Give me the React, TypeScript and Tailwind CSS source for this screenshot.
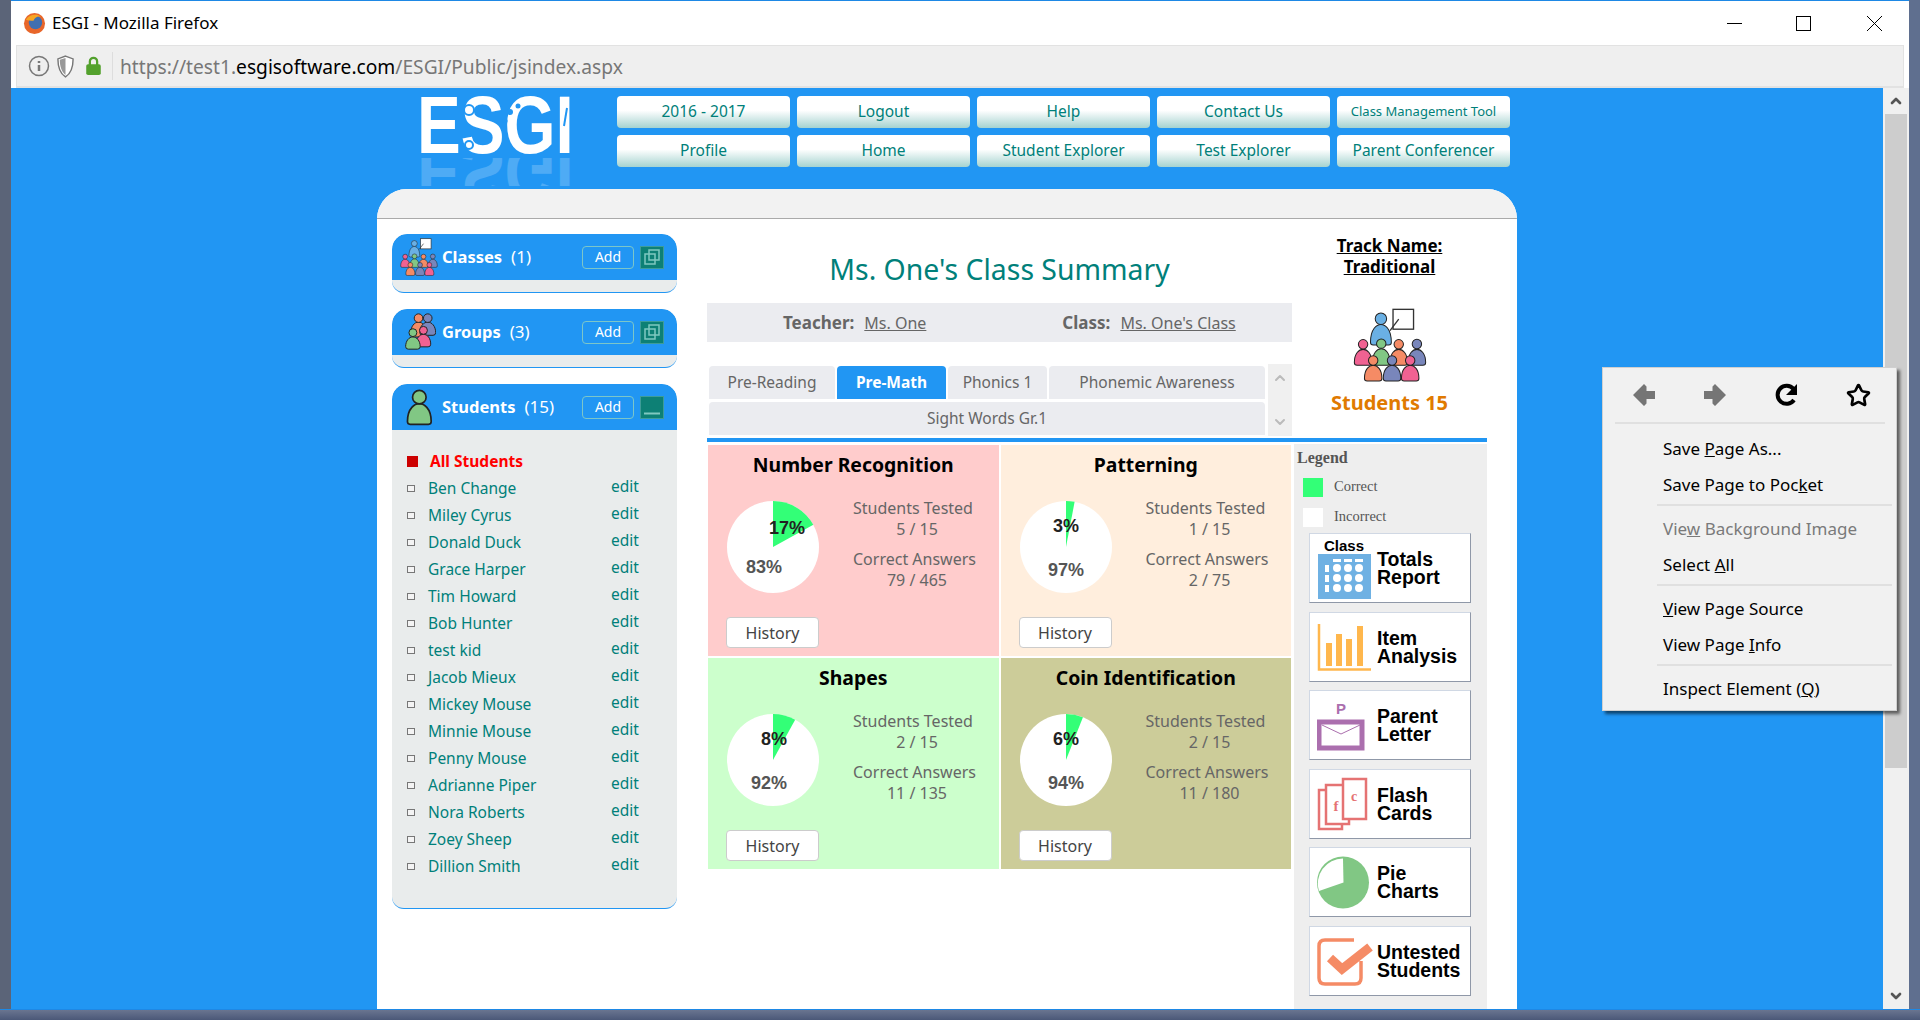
import { ChevronDown, ChevronUp, Star } from 'lucide-react';

const teal = 'text-[#00807a]';

const topButtons = ['2016 - 2017', 'Logout', 'Help', 'Contact Us', 'Class Management Tool', 'Profile', 'Home', 'Student Explorer', 'Test Explorer', 'Parent Conferencer'];

const students = ['Ben Change', 'Miley Cyrus', 'Donald Duck', 'Grace Harper', 'Tim Howard', 'Bob Hunter', 'test kid', 'Jacob Mieux', 'Mickey Mouse', 'Minnie Mouse', 'Penny Mouse', 'Adrianne Piper', 'Nora Roberts', 'Zoey Sheep', 'Dillion Smith'];

const tiles = [
  { name: 'Number Recognition', bg: 'bg-[#ffcccc]', pct: 17, tested: '5 / 15', answers: '79 / 465', a: [14, -19], b: [-9, 20] },
  { name: 'Patterning', bg: 'bg-[#ffeedd]', pct: 3, tested: '1 / 15', answers: '2 / 75', a: [0, -21], b: [0, 23] },
  { name: 'Shapes', bg: 'bg-[#ccffcc]', pct: 8, tested: '2 / 15', answers: '11 / 135', a: [1, -21], b: [-4, 23] },
  { name: 'Coin Identification', bg: 'bg-[#cccc99]', pct: 6, tested: '2 / 15', answers: '11 / 180', a: [0, -21], b: [0, 23] },
];

// one figure of the people icons: head + dome body
const Person = ({ x, y, r, w, top, bot, fill, sw = 3 }: { x: number; y: number; r: number; w: number; top: number; bot: number; fill: string; sw?: number }) => (
  <g fill={fill} stroke="#222" strokeWidth={sw}>
    <path d={`M${x - w} ${bot - 8}C${x - w} ${top + 12} ${x - 12} ${top} ${x} ${top}C${x + 12} ${top} ${x + w} ${top + 12} ${x + w} ${bot - 8}Q${x + w} ${bot} ${x + w - 8} ${bot}L${x - w + 8} ${bot}Q${x - w} ${bot} ${x - w} ${bot - 8}Z`} />
    <circle cx={x} cy={y} r={r} />
  </g>
);

const ClassIcon = ({ className }: { className: string }) => (
  <svg viewBox="195 235 220 220" className={className}>
    <rect x="314" y="239" width="61" height="59" fill="#fff" stroke="#333" strokeWidth="4" />
    <path d="M305 302L331 268" stroke="#333" strokeWidth="4" />
    <Person x={278} y={267} r={17} w={31} top={284} bot={345} fill="#6ab0e4" />
    <Person x={225} y={343} r={14} w={26} top={358} bot={405} fill="#f06292" />
    <Person x={385} y={342} r={14} w={26} top={358} bot={405} fill="#7986bb" />
    <Person x={331} y={343} r={14} w={26} top={358} bot={405} fill="#f58b65" />
    <Person x={279} y={341} r={14} w={26} top={356} bot={405} fill="#81c784" />
    <Person x={255} y={391} r={14} w={26} top={405} bot={452} fill="#f58b65" />
    <Person x={365} y={391} r={14} w={26} top={405} bot={452} fill="#f06292" />
    <Person x={311} y={391} r={14} w={26} top={405} bot={452} fill="#7986bb" />
  </svg>
);

const GroupsIcon = () => (
  <svg viewBox="60 275 100 120" className="h-[40px] w-[33px]">
    <Person x={107} y={293} r={13} w={24} top={305} bot={350} fill="#f58b65" />
    <Person x={135} y={293} r={13} w={24} top={305} bot={345} fill="#7986bb" />
    <Person x={122} y={330} r={12} w={22} top={342} bot={380} fill="#f06292" />
    <Person x={90} y={337} r={12} w={22} top={350} bot={387} fill="#81c784" />
  </svg>
);

const StudentIcon = () => (
  <svg viewBox="65 500 85 112" className="h-[38px] w-[29px]">
    <Person x={107} y={527} r={20} w={35} top={546} bot={607} fill="#81c784" sw={5} />
  </svg>
);

const Expand = ({ minimized }: { minimized?: boolean }) => (
  <div className="flex h-[23px] w-[24px] items-center justify-center border border-[#3d9c98] bg-[#0d8075]">
    <svg viewBox="0 0 22 22" className="h-[22px] w-[22px]" fill="none" stroke="#7fc8c0" strokeWidth="1.5">
      {minimized ? (
        <path d="M3 17.5H19" strokeWidth="2" />
      ) : (
        <>
          <rect x="8" y="4" width="10" height="10" />
          <rect x="4" y="8" width="10" height="10" />
        </>
      )}
    </svg>
  </div>
);

const PanelHeader = ({ title, count, icon, minimized }: { title: string; count: string; icon: React.ReactNode; minimized?: boolean }) => (
  <div className="flex h-[46px] items-center rounded-t-[15px] bg-[#2196f3] pr-[13px] text-white">
    <div className="flex w-[50px] justify-center pl-[4px]">{icon}</div>
    <span className="text-[16.5px] font-bold">{title}</span>
    <span className="ml-[9px] text-[17px]">{count}</span>
    <button className="ml-auto mr-[6px] h-[23px] w-[52px] rounded-[4px] border border-[#7cc6c8] text-[14px] leading-none">Add</button>
    <Expand minimized={minimized} />
  </div>
);

const Panel = ({ title, count, icon }: { title: string; count: string; icon: React.ReactNode }) => (
  <div className="overflow-hidden rounded-t-[15px] rounded-b-[12px] border-b border-[#2196f3] bg-[#e9ecec]">
    <PanelHeader title={title} count={count} icon={icon} />
    <div className="h-[12px]" />
  </div>
);

const Pie = ({ pct, a, b }: { pct: number; a: number[]; b: number[] }) => {
  const angle = (pct / 100) * 2 * Math.PI;
  const ex = 46 + 46 * Math.sin(angle);
  const ey = 46 - 46 * Math.cos(angle);
  return (
    <svg width="92" height="92" viewBox="0 0 92 92" className="shrink-0 font-['Liberation_Sans',sans-serif] text-[18px] font-bold">
      <circle cx="46" cy="46" r="46" fill="#fff" />
      <path d={`M46 46L46 0A46 46 0 0 1 ${ex} ${ey}Z`} fill="#33ff77" />
      <text x={46 + a[0]} y={46 + a[1] + 6} textAnchor="middle" fill="#222">{pct}%</text>
      <text x={46 + b[0]} y={46 + b[1] + 6} textAnchor="middle" fill="#555">{100 - pct}%</text>
    </svg>
  );
};

const Tile = ({ tile }: { tile: (typeof tiles)[number] }) => (
  <div className={`flex h-[211px] flex-col ${tile.bg}`}>
    <div className="h-[40px] text-center text-[19.4px] font-bold leading-[40px] text-black">{tile.name}</div>
    <div className="mt-[13px] flex pl-[19px]">
      <div className="mt-[3px]"><Pie pct={tile.pct} a={tile.a} b={tile.b} /></div>
      <div className="ml-[34px] w-[120px] whitespace-nowrap text-center text-[16px] leading-[21px] text-[#666]">
        <div>Students Tested</div>
        <div className="pl-[8px]">{tile.tested}</div>
        <div className="mt-[9px]">Correct Answers</div>
        <div className="pl-[8px]">{tile.answers}</div>
      </div>
    </div>
    <button className="ml-[18px] mt-[24px] h-[31px] w-[93px] rounded-[4px] border border-[#ccc] bg-white text-[16px] text-[#444]">History</button>
  </div>
);

const ReportButton = ({ lines, icon }: { lines: string[]; icon: React.ReactNode }) => (
  <div className="flex h-[70px] items-center gap-[4px] border border-t-[#d0d8e4] border-l-[#d0d8e4] border-r-[#8f98a8] border-b-[#8f98a8] bg-white pl-[7px] font-['Liberation_Sans',sans-serif] text-[19.5px] font-bold leading-[18px] text-black">
    {icon}
    <div>{lines.map(l => <div key={l}>{l}</div>)}</div>
  </div>
);

const ReportIcon = ({ children }: { children: React.ReactNode }) => (
  <svg viewBox="0 0 56 62" className="h-[62px] w-[56px] shrink-0">{children}</svg>
);

const dots = [[0, 0], [1, 0], [2, 0], [0, 1], [1, 1], [2, 1], [0, 2], [1, 2], [2, 2]];

const reports = [
  {
    lines: ['Totals', 'Report'],
    icon: (
      <ReportIcon>
        <text x="27" y="14" textAnchor="middle" fontSize="15" fontWeight="700" fill="#000">Class</text>
        <rect x="1" y="17" width="53" height="45" fill="#6fb1e3" />
        {[16, 27, 38].map(x => <rect key={x} x={x} y="22" width="8" height="3" fill="#fff" />)}
        {[31, 41, 51].map(y => <rect key={y} x="8" y={y - 3} width="4" height="7" fill="#fff" />)}
        {dots.map(([c, r]) => <circle key={`${c}${r}`} cx={20 + c * 11} cy={31 + r * 10} r="4" fill="#fff" />)}
      </ReportIcon>
    ),
  },
  {
    lines: ['Item', 'Analysis'],
    icon: (
      <ReportIcon>
        <path d="M2 8V53.5H54" fill="none" stroke="#ffb74d" strokeWidth="2.5" />
        <rect x="9" y="27" width="6" height="23" fill="#ffb74d" />
        <rect x="19" y="18" width="6" height="32" fill="#ffb74d" />
        <rect x="29" y="23" width="6" height="27" fill="#ffb74d" />
        <rect x="40" y="10" width="6" height="40" fill="#ffb74d" />
      </ReportIcon>
    ),
  },
  {
    lines: ['Parent', 'Letter'],
    icon: (
      <ReportIcon>
        <text x="24" y="20" textAnchor="middle" fontSize="15" fontWeight="700" fill="#ab6fae">P</text>
        <rect x="2" y="28" width="43" height="26" fill="#fff" stroke="#ab6fae" strokeWidth="5" />
        <path d="M5 31L24 40L43 31" fill="none" stroke="#ab6fae" strokeWidth="1" />
      </ReportIcon>
    ),
  },
  {
    lines: ['Flash', 'Cards'],
    icon: (
      <ReportIcon>
        <g fill="#fff" stroke="#e57373" strokeWidth="2.5">
          <rect x="2" y="17" width="23" height="39" />
          <rect x="9" y="12" width="23" height="39" />
          <rect x="26" y="6" width="23" height="40" />
        </g>
        <text x="19" y="38" textAnchor="middle" fontSize="15" fontFamily="Liberation Serif" fill="#e57373">f</text>
        <text x="37" y="28" textAnchor="middle" fontSize="14" fontFamily="Liberation Serif" fill="#e57373">c</text>
      </ReportIcon>
    ),
  },
  {
    lines: ['Pie', 'Charts'],
    icon: (
      <ReportIcon>
        <circle cx="26" cy="31.5" r="26" fill="#81c784" />
        <path d="M26.5 31.5L2 40A25 25 0 0 1 26 7.5Z" fill="#fff" />
      </ReportIcon>
    ),
  },
  {
    lines: ['Untested', 'Students'],
    icon: (
      <ReportIcon>
        <path d="M37 10H8Q2 10 2 16V48Q2 54 8 54H38Q44 54 44 48V31" fill="none" stroke="#f58b65" strokeWidth="3.5" />
        <path d="M13 28L25 39L53 17" fill="none" stroke="#f58b65" strokeWidth="9" />
      </ReportIcon>
    ),
  },
];

const MenuItem = ({ children, muted }: { children: React.ReactNode; muted?: boolean }) => (
  <div className={`flex h-[36px] items-center pl-[60px] ${muted ? 'text-[#7a7a7a]' : 'text-black'}`}><span>{children}</span></div>
);

const MenuSep = () => <div className="mb-[5px] ml-[54px] mr-[4px] mt-[1px] h-[2px] bg-[#e0e0e0]" />;

const ContextMenu = () => (
  <div className="absolute left-[1602px] top-[367px] z-10 w-[295px] border border-[#d0d0d0] bg-[#f1f1f1] pb-[3px] text-[17px] shadow-[3px_3px_3px_rgba(0,0,0,0.55)]">
    <div className="flex h-[54px] items-center">
      <svg viewBox="0 0 24 24" className="ml-[29px] h-[24px] w-[24px]" fill="#757575"><path d="M12 1L1 12L12 23L14.5 20.5V16H23V8H14.5V3.5Z" /></svg>
      <svg viewBox="0 0 24 24" className="ml-[47px] h-[24px] w-[24px]" fill="#757575"><path d="M12 1L23 12L12 23L9.500 20.500V16H1V8H9.500V3.500Z" /></svg>
      <svg viewBox="0 0 24 24" className="ml-[48px] h-[24px] w-[24px]" fill="none"><path d="M19 17A9 9 0 1 1 18.500 6" stroke="#000" strokeWidth="4" /><path d="M22 1V12H11Z" fill="#000" /></svg>
      <Star size={25} strokeWidth={2.6} color="#000" className="ml-[47px]" />
    </div>
    <div className="mb-[7px] ml-[12px] mr-[11px] h-[2px] bg-[#e0e0e0]" />
    <MenuItem>Save <u>P</u>age As...</MenuItem>
    <MenuItem>Save Page to Poc<u>k</u>et</MenuItem>
    <MenuSep />
    <MenuItem muted>Vie<u>w</u> Background Image</MenuItem>
    <MenuItem>Select <u>A</u>ll</MenuItem>
    <MenuSep />
    <MenuItem><u>V</u>iew Page Source</MenuItem>
    <MenuItem>View Page <u>I</u>nfo</MenuItem>
    <MenuSep />
    <MenuItem>Inspect Element (<u>Q</u>)</MenuItem>
  </div>
);

const Logo = () => (
  <div className="relative ml-[406px] mt-[2px] h-[97px] w-[160px] shrink-0 font-['Liberation_Sans',sans-serif] text-[82px] font-bold leading-[70px] text-white">
    <div className="origin-top-left scale-x-[0.8]">ESGI</div>
    <div className="absolute left-0 top-[68px] h-[28px] origin-center -scale-y-100 overflow-hidden leading-[28px] opacity-20">
      <div className="origin-top-left scale-x-[0.8]">ESGI</div>
    </div>
    <svg viewBox="0 0 160 62" className="absolute left-0 top-[6px] h-[62px] w-[160px]">
      <circle cx="52" cy="14" r="5" fill="none" stroke="#2196f3" strokeWidth="2" />
      <circle cx="52" cy="49" r="4" fill="none" stroke="#2196f3" strokeWidth="2" />
      <circle cx="101" cy="10" r="2.500" fill="#2196f3" />
      <circle cx="93" cy="16" r="3" fill="#2196f3" />
      <circle cx="88" cy="25" r="2.500" fill="#2196f3" />
      <path d="M150 12L147 30" stroke="#2196f3" strokeWidth="2" />
    </svg>
  </div>
);

const App = () => {
  return (
    <div className="relative flex h-[1020px] w-[1920px] flex-col overflow-hidden bg-[#5f6f8f] font-['Noto_Sans','Liberation_Sans',sans-serif]">
      <div className="flex h-[1009px]">
        <div className="w-[11px] bg-[#5b6478]" />
        <div className="flex w-[1898px] flex-col border-t border-[#1e88e5] bg-white">
          {/* window title bar */}
          <div className="flex h-[44px] items-center">
            <svg viewBox="0 0 24 24" className="ml-[12px] h-[23px] w-[23px]">
              <circle cx="12" cy="12" r="11" fill="#e8662a" />
              <circle cx="13" cy="11" r="7" fill="#3f6fb0" />
              <path d="M3 8C6 3 14 1 19 5C15 4 12 6 11 9C8 9 5 9 3 8Z" fill="#f6a623" />
            </svg>
            <span className="ml-[6px] text-[17px] text-black">ESGI - Mozilla Firefox</span>
            <svg width="15" height="15" viewBox="0 0 15 15" className="ml-auto" fill="none" stroke="#000"><path d="M0 7.500H15" /></svg>
            <svg width="15" height="15" viewBox="0 0 15 15" className="ml-[54px]" fill="none" stroke="#000"><rect x="0.500" y="0.500" width="14" height="14" /></svg>
            <svg width="15" height="15" viewBox="0 0 15 15" className="ml-[56px] mr-[27px]" fill="none" stroke="#000"><path d="M0 0L15 15M15 0L0 15" /></svg>
          </div>
          {/* address bar */}
          <div className="ml-[5px] mr-[5px] flex h-[43px] items-center border border-b-2 border-[#e2e2e2] bg-[#efefef]">
            <svg viewBox="0 0 22 22" className="ml-[11px] h-[22px] w-[22px]" fill="none" stroke="#777" strokeWidth="1.500">
              <circle cx="11" cy="11" r="9.500" />
              <path d="M11 10V16M11 6V8" strokeWidth="2.500" />
            </svg>
            <svg viewBox="0 0 20 24" className="ml-[6px] h-[23px] w-[19px]">
              <path d="M10 1L18 4C18 12 16 19 10 23C4 19 2 12 2 4Z" fill="#fff" stroke="#777" strokeWidth="1.500" />
              <path d="M10 3V21C6 18 4 12 4 5Z" fill="#999" />
            </svg>
            <svg viewBox="0 0 18 22" className="ml-[10px] h-[20px] w-[17px]">
              <path d="M5 10V6A4 4 0 0 1 13 6V10" fill="none" stroke="#53a12d" strokeWidth="2.500" />
              <rect x="1" y="9" width="16" height="12" rx="2" fill="#53a12d" />
            </svg>
            <div className="ml-[10px] h-[28px] w-px bg-[#ddd]" />
            <div className="ml-[7px] pt-[3px] text-[19.2px] text-[#777]">https://test1.<span className="text-black">esgisoftware.com</span>/ESGI/Public/jsindex.aspx</div>
          </div>
          <div className="flex min-h-0 flex-1">
            {/* page */}
            <div className="flex w-[1872px] flex-col bg-[#2196f3]">
              <div className="flex h-[101px] shrink-0">
                <Logo />
                <div className="ml-[40px] mt-[8px] grid grid-cols-[repeat(5,173px)] grid-rows-[32px_32px] gap-[7px]">
                  {topButtons.map(b => (
                    <button key={b} className={`rounded-[4px] bg-gradient-to-b from-white from-45% to-[#a5d3d0] ${teal} ${b.length > 20 ? 'text-[13px]' : 'text-[15.5px]'}`}>{b}</button>
                  ))}
                </div>
              </div>
              <div className="ml-[366px] flex w-[1140px] flex-1 flex-col overflow-hidden rounded-t-[30px] bg-white">
                <div className="h-[30px] shrink-0 border-b border-[#aaa] bg-[#f2f2f2]" />
                <div className="flex pl-[15px] pt-[15px]">
                  {/* left column */}
                  <div className="flex w-[285px] shrink-0 flex-col gap-[16px] self-start">
                    <Panel title="Classes" count="(1)" icon={<ClassIcon className="h-[38px] w-[38px]" />} />
                    <Panel title="Groups" count="(3)" icon={<GroupsIcon />} />
                    <div className="overflow-hidden rounded-t-[15px] rounded-b-[12px] border-b border-[#2196f3] bg-[#e9ecec]">
                      <PanelHeader title="Students" count="(15)" icon={<StudentIcon />} minimized />
                      <div className="h-[478px] px-[15px] pt-[18px] text-[15.5px]">
                        <div className="flex h-[27px] items-center font-bold text-[#ff0000]">
                          <span className="mr-[12px] h-[11px] w-[11px] bg-[#cc0000]" />All Students
                        </div>
                        {students.map(s => (
                          <div key={s} className={`flex h-[27px] items-center ${teal}`}>
                            <span className="mr-[13px] h-[7px] w-[8px] border border-[#777] bg-[#f4f4f4]" />
                            <span className="w-[183px]">{s}</span>
                            <span className="-translate-y-[2px]">edit</span>
                          </div>
                        ))}
                      </div>
                    </div>
                  </div>
                  {/* main column */}
                  <div className="-mt-[15px] ml-[30px] w-[780px] shrink-0">
                    <div className="flex h-[219px]">
                      <div className="w-[585px] shrink-0">
                        <div className={`flex h-[84px] items-center justify-center pt-[16px] text-[28.4px] ${teal}`}>Ms. One's Class Summary</div>
                        <div className="flex h-[39px] items-center bg-[#ebecf0] text-[16px] text-[#666]">
                          <b className="ml-[76px] text-[17px]">Teacher:</b>
                          <u className="ml-[10px]">Ms. One</u>
                          <b className="ml-[136px] text-[17px]">Class:</b>
                          <u className="ml-[10px]">Ms. One's Class</u>
                        </div>
                        <div className="mt-[22px] flex">
                          <div className="ml-[2px] w-[556px] shrink-0 pt-[2px] text-[15.5px] text-[#666]">
                            <div className="flex gap-[2px]">
                              <div className="flex h-[33px] w-[126px] items-center justify-center rounded-t-[4px] bg-[#ebecf0]">Pre-Reading</div>
                              <div className="flex h-[33px] w-[109px] items-center justify-center rounded-t-[4px] bg-[#2196f3] font-bold text-white">Pre-Math</div>
                              <div className="flex h-[33px] w-[99px] items-center justify-center rounded-t-[4px] bg-[#ebecf0]">Phonics 1</div>
                              <div className="flex h-[33px] w-[216px] items-center justify-center rounded-t-[4px] bg-[#ebecf0]">Phonemic Awareness</div>
                            </div>
                            <div className="mt-[3px] flex h-[33px] items-center justify-center rounded-t-[4px] bg-[#ebecf0]">Sight Words Gr.1</div>
                          </div>
                          <div className="ml-[3px] flex h-[72px] w-[24px] flex-col items-center justify-between bg-[#f0f0f0] py-[6px] text-[#bbb]">
                            <ChevronUp size={16} strokeWidth={3} />
                            <ChevronDown size={16} strokeWidth={3} />
                          </div>
                        </div>
                      </div>
                      <div className="flex w-[195px] flex-col items-center">
                        <div className="mt-[16px] text-center text-[17px] font-bold leading-[21px] text-black underline">Track Name:<br />Traditional</div>
                        <ClassIcon className="mt-[31px] h-[74px] w-[74px]" />
                        <div className="mt-[6px] text-[20px] font-bold text-[#e07a00]">Students 15</div>
                      </div>
                    </div>
                    <div className="h-[4px] bg-[#2196f3]" />
                    <div className="mt-[2px] flex">
                      <div className="ml-[1px] mt-[1px] grid w-[583px] shrink-0 grid-cols-2 content-start gap-[2px]">
                        {tiles.map(t => <Tile key={t.name} tile={t} />)}
                      </div>
                      <div className="ml-[3px] h-[570px] w-[193px] bg-[#eeeeee] font-['Liberation_Serif',serif]">
                        <div className="ml-[3px] mt-[4px] text-[16px] font-bold leading-[20px] text-[#555]">Legend</div>
                        <div className="ml-[9px] mt-[9px] flex h-[20px] items-center text-[14.5px] text-[#555]">
                          <span className="mr-[11px] h-[19px] w-[20px] bg-[#33ff77]" />Correct
                        </div>
                        <div className="ml-[9px] mt-[10px] flex h-[20px] items-center text-[14.5px] text-[#555]">
                          <span className="mr-[11px] h-[19px] w-[20px] bg-white" />Incorrect
                        </div>
                        <div className="ml-[15px] mt-[6px] flex w-[162px] flex-col gap-[8.600px]">
                          {reports.map(r => <ReportButton key={r.lines[0]} lines={r.lines} icon={r.icon} />)}
                        </div>
                      </div>
                    </div>
                  </div>
                </div>
              </div>
            </div>
            {/* scrollbar */}
            <div className="flex w-[26px] flex-col items-center bg-[#f0f0f0]">
              <div className="flex h-[26px] items-center justify-center text-[#555]"><ChevronUp size={16} strokeWidth={4} /></div>
              <div className="h-[654px] w-[22px] bg-[#cdcdcd]" />
              <div className="mt-auto flex h-[26px] items-center justify-center text-[#555]"><ChevronDown size={16} strokeWidth={4} /></div>
            </div>
          </div>
        </div>
        <div className="w-[11px] bg-[#5f6f8f]" />
      </div>
      <div className="h-[11px] border-t border-[#1e88e5] bg-gradient-to-b from-[#6a7590] to-[#4b5878]" />
      <ContextMenu />
    </div>
  );
};

export default App;
